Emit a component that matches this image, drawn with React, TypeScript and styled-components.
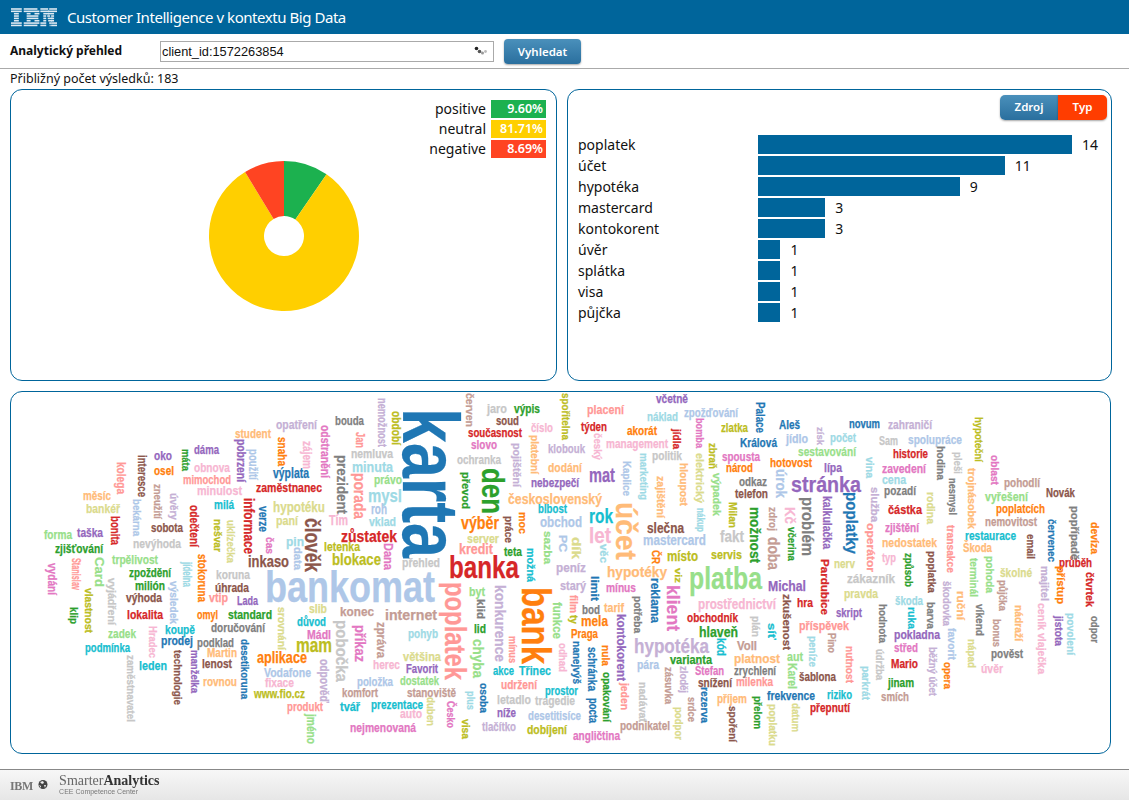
import React from 'react';
import styled, { createGlobalStyle } from 'styled-components';

const GlobalStyle = createGlobalStyle`
  html, body { margin: 0; padding: 0; background: #fff; }
  body { font-family: "Noto Sans", "Liberation Sans", sans-serif; color: #111; }
`;

const BLUE = '#00659b';

// d3 category20, the palette of the cloud
const PALETTE: Record<string, string> = {
  a: '#1f77b4', b: '#aec7e8', c: '#ff7f0e', d: '#ffbb78', e: '#2ca02c',
  f: '#98df8a', g: '#d62728', h: '#ff9896', i: '#9467bd', j: '#c5b0d5',
  k: '#8c564b', l: '#c49c94', m: '#e377c2', n: '#f7b6d2', o: '#7f7f7f',
  p: '#c7c7c7', q: '#bcbd22', r: '#dbdb8d', s: '#17becf', t: '#9edae5',
};

type Word = [string, number, number, number, number, string];

// text, left, baseline, length, font size, colour (page coordinates)
const FLAT_WORDS: Word[] = [
  ['opatření', 276, 429, 41, 12, 'j'], ['bouda', 335, 425, 29, 12, 'o'], ['student', 235, 438, 36, 12, 'd'],
  ['dáma', 194, 454, 25, 12, 'i'], ['oko', 154, 460, 18, 12, 'i'], ['osel', 154, 475, 20, 12, 'c'],
  ['obnova', 194, 472, 36, 12, 'n'], ['výplata', 273, 478, 36, 13, 'a'], ['mimochod', 183, 484, 48, 12, 'h'],
  ['minulost', 197, 495, 45, 12, 'n'], ['zaměstnanec', 256, 492, 66, 12, 'g'], ['měsíc', 83, 500, 28, 11, 'd'],
  ['milá', 214, 509, 20, 11, 's'], ['bankéř', 86, 513, 34, 12, 'r'], ['hypotéku', 273, 512, 52, 13, 'r'],
  ['paní', 276, 525, 22, 12, 'r'], ['Tím', 329, 525, 19, 13, 'n'], ['sobota', 151, 532, 32, 11, 'k'],
  ['forma', 44, 539, 28, 11, 'f'], ['taška', 77, 537, 26, 11, 'i'], ['nevýhoda', 133, 548, 48, 11, 'p'],
  ['zjišťování', 55, 553, 48, 11, 'e'], ['pin', 286, 546, 18, 12, 't'], ['letenka', 324, 551, 36, 11, 'q'],
  ['zůstatek', 341, 542, 56, 15, 'g'], ['blokace', 332, 565, 49, 15, 'q'], ['inkaso', 248, 567, 41, 15, 'k'],
  ['trpělivost', 112, 564, 46, 11, 'f'], ['minuta', 352, 472, 41, 14, 't'], ['nemluva', 351, 458, 42, 11, 'p'],
  ['mysl', 368, 502, 34, 17, 't'], ['roh', 371, 514, 16, 13, 'b'], ['vklad', 369, 526, 27, 11, 't'],
  ['právo', 374, 484, 28, 11, 'f'], ['zpoždění', 129, 577, 42, 11, 'e'], ['koruna', 216, 579, 34, 11, 'p'],
  ['milión', 135, 590, 30, 11, 'e'], ['úhrada', 215, 592, 34, 11, 'k'], ['výhoda', 126, 602, 36, 11, 'k'],
  ['vtip', 209, 602, 19, 11, 'h'], ['Lada', 237, 605, 21, 11, 'i'], ['lokalita', 127, 619, 36, 11, 'g'],
  ['omyl', 197, 619, 21, 11, 'c'], ['standard', 228, 619, 44, 11, 'e'], ['slib', 309, 613, 18, 11, 'r'],
  ['konec', 340, 616, 34, 11, 'l'], ['důvod', 297, 626, 29, 11, 's'], ['doručování', 211, 632, 54, 11, 'o'],
  ['koupě', 165, 634, 30, 11, 's'], ['zadek', 108, 638, 28, 11, 'f'], ['Mádl', 307, 639, 24, 11, 'm'],
  ['prodej', 161, 645, 32, 11, 'a'], ['podklad', 197, 647, 37, 11, 'o'], ['podmínka', 85, 652, 45, 11, 's'],
  ['Martin', 207, 657, 30, 11, 'd'], ['mam', 296, 652, 36, 18, 'q'], ['aplikace', 257, 663, 50, 15, 'c'],
  ['leden', 139, 670, 28, 12, 's'], ['lenost', 202, 668, 30, 11, 'k'], ['Vodafone', 264, 677, 47, 12, 'b'],
  ['fixace', 265, 687, 29, 11, 'n'], ['rovnou', 203, 686, 34, 11, 'd'], ['www.fio.cz', 254, 698, 51, 11, 'q'],
  ['herec', 373, 669, 27, 11, 'n'], ['položka', 357, 686, 36, 11, 'b'], ['komfort', 342, 697, 36, 11, 'l'],
  ['produkt', 287, 711, 36, 11, 'h'], ['tvář', 340, 711, 20, 11, 's'], ['prezentace', 371, 709, 52, 11, 's'],
  ['nejmenovaná', 350, 732, 66, 11, 'm'], ['bankomat', 265, 602, 170, 44, 'b'], ['jaro', 487, 413, 20, 11, 'p'],
  ['výpis', 514, 413, 26, 11, 'e'], ['placení', 587, 414, 37, 12, 'h'], ['včetně', 656, 403, 32, 11, 'i'],
  ['náklad', 647, 421, 31, 11, 't'], ['zpožďování', 684, 417, 54, 11, 'b'], ['soud', 496, 425, 23, 11, 'k'],
  ['současnost', 468, 437, 54, 11, 'g'], ['číslo', 531, 432, 22, 11, 'n'], ['týden', 581, 431, 26, 12, 'g'],
  ['akorát', 627, 435, 30, 11, 'c'], ['zlatka', 721, 432, 27, 11, 'q'], ['slovo', 471, 449, 26, 11, 'm'],
  ['klobouk', 548, 453, 37, 11, 'j'], ['management', 606, 448, 62, 11, 'n'], ['politik', 652, 460, 30, 11, 'p'],
  ['ochranka', 457, 464, 44, 11, 'p'], ['dodání', 548, 472, 34, 12, 'd'], ['mat', 589, 482, 26, 18, 'i'],
  ['nebezpečí', 531, 487, 48, 11, 'i'], ['československý', 508, 504, 94, 14, 'd'], ['blbost', 538, 513, 29, 12, 's'],
  ['výběr', 461, 529, 38, 17, 'c'], ['rok', 589, 523, 24, 18, 's'], ['obchod', 540, 527, 42, 14, 'b'],
  ['slečna', 647, 533, 37, 13, 'k'], ['fakt', 720, 542, 24, 15, 'p'], ['let', 589, 543, 22, 21, 'n'],
  ['server', 467, 543, 32, 11, 'r'], ['mastercard', 643, 545, 63, 13, 'b'], ['kredit', 459, 554, 34, 13, 'h'],
  ['teta', 504, 556, 18, 11, 'e'], ['místo', 667, 561, 31, 13, 'q'], ['servis', 711, 559, 31, 12, 'q'],
  ['přehled', 402, 567, 38, 11, 'p'], ['banka', 449, 578, 70, 32, 'g'], ['peníz', 556, 572, 30, 11, 'j'],
  ['hypotéky', 607, 577, 60, 14, 'd'], ['starý', 560, 590, 26, 11, 'j'], ['mínus', 606, 592, 30, 11, 'm'],
  ['internet', 385, 620, 52, 13, 'l'], ['pohyb', 408, 638, 30, 11, 't'], ['byt', 469, 596, 16, 11, 'f'],
  ['tarif', 604, 612, 20, 11, 'd'], ['bod', 582, 614, 18, 11, 'o'], ['mela', 581, 626, 27, 13, 'c'],
  ['lid', 474, 633, 12, 11, 'e'], ['Praga', 571, 638, 27, 11, 'c'], ['Favorit', 406, 673, 32, 11, 'i'],
  ['většina', 403, 661, 38, 12, 'r'], ['dostatek', 400, 685, 39, 11, 'f'], ['stanoviště', 407, 697, 49, 11, 'l'],
  ['akce', 493, 675, 21, 11, 's'], ['Třinec', 519, 675, 32, 12, 's'], ['udržení', 501, 689, 36, 11, 'h'],
  ['prostor', 545, 695, 33, 11, 's'], ['letadlo', 497, 704, 34, 11, 'p'], ['tragedie', 535, 705, 40, 11, 'p'],
  ['níže', 497, 717, 19, 11, 'i'], ['auto', 400, 718, 22, 11, 'n'], ['desetitisíce', 528, 720, 53, 11, 'b'],
  ['tlačítko', 482, 731, 34, 11, 'j'], ['dobíjení', 527, 734, 40, 11, 'q'], ['angličtina', 573, 740, 47, 11, 'm'],
  ['podnikatel', 620, 730, 50, 11, 'l'], ['hypotéka', 634, 653, 75, 18, 'j'], ['pára', 637, 669, 22, 11, 'b'],
  ['varianta', 670, 664, 42, 11, 'e'], ['Štefan', 695, 675, 29, 11, 'm'], ['snížení', 698, 687, 34, 11, 'k'],
  ['příjem', 717, 703, 30, 11, 'd'], ['obchodník', 687, 622, 51, 12, 'g'], ['hlaveň', 699, 637, 39, 13, 'e'],
  ['prostřednictví', 698, 609, 78, 13, 'n'], ['platba', 689, 589, 73, 29, 'f'], ['Voll', 737, 650, 20, 11, 'l'],
  ['platnost', 734, 663, 46, 12, 'd'], ['zrychlení', 734, 675, 42, 11, 'o'], ['milenka', 736, 686, 37, 11, 'h'],
  ['Aleš', 779, 429, 21, 11, 'a'], ['novum', 849, 428, 31, 11, 'a'], ['zahraničí', 888, 429, 44, 11, 'j'],
  ['jídlo', 786, 443, 22, 11, 'b'], ['počet', 830, 442, 26, 11, 't'], ['Sam', 879, 445, 19, 11, 'p'],
  ['spolupráce', 908, 444, 54, 11, 'b'], ['Králová', 740, 447, 37, 11, 'a'], ['sestavování', 798, 456, 58, 11, 'f'],
  ['historie', 893, 458, 35, 11, 'g'], ['hotovost', 770, 467, 42, 11, 'c'], ['lípa', 824, 472, 18, 11, 'i'],
  ['zavedení', 882, 473, 44, 11, 'm'], ['národ', 726, 472, 27, 11, 'c'], ['spousta', 722, 461, 38, 11, 'm'],
  ['odkaz', 739, 486, 28, 11, 'o'], ['telefon', 735, 498, 33, 11, 'k'], ['cena', 882, 484, 24, 11, 't'],
  ['pozadí', 884, 495, 32, 11, 'o'], ['stránka', 791, 492, 70, 20, 'i'], ['vyřešení', 985, 501, 43, 12, 'f'],
  ['pohodlí', 1004, 487, 36, 11, 'l'], ['Novák', 1046, 497, 29, 11, 'k'], ['poplatcích', 996, 513, 49, 12, 'c'],
  ['částka', 888, 514, 34, 12, 'g'], ['nemovitost', 985, 526, 52, 11, 'l'], ['zjištění', 885, 532, 34, 11, 'm'],
  ['restaurace', 965, 540, 51, 11, 's'], ['nedostatek', 882, 547, 55, 12, 'd'], ['Škoda', 963, 552, 29, 11, 'd'],
  ['typ', 882, 562, 14, 11, 'n'], ['průběh', 1059, 567, 33, 11, 'g'], ['nerv', 834, 568, 21, 11, 'r'],
  ['zákazník', 847, 583, 48, 11, 'p'], ['školné', 1000, 577, 32, 11, 'r'], ['Michal', 768, 591, 38, 13, 'i'],
  ['pravda', 844, 598, 34, 11, 'r'], ['hra', 797, 607, 16, 11, 'g'], ['škoda', 895, 605, 28, 11, 't'],
  ['skript', 836, 617, 26, 11, 'i'], ['příspěvek', 799, 630, 50, 12, 'h'], ['pokladna', 894, 639, 46, 12, 'i'],
  ['střed', 894, 652, 24, 12, 'm'], ['aut', 787, 661, 16, 12, 'f'], ['pověst', 991, 658, 32, 11, 'o'],
  ['úvěr', 981, 673, 22, 11, 'n'], ['Mario', 891, 668, 27, 11, 'g'], ['šablona', 799, 681, 37, 11, 'k'],
  ['jinam', 888, 687, 26, 11, 'e'], ['frekvence', 767, 700, 48, 11, 'a'], ['riziko', 827, 699, 25, 11, 's'],
  ['smích', 881, 701, 28, 11, 'l'], ['přepnutí', 810, 712, 40, 11, 'g'],
];

// text, baseline x, top, length, font size, colour: read from top to bottom
const TURNED_WORDS: Word[] = [
  ['nemožnost', 378, 398, 49, 11, 'j'], ['odstranění', 321, 425, 53, 11, 'm'], ['Jan', 356, 432, 16, 11, 'h'],
  ['snaha', 278, 437, 29, 11, 'c'], ['zájem', 303, 441, 28, 11, 'n'], ['pobrzení', 237, 439, 43, 11, 'i'],
  ['použití', 249, 449, 31, 11, 'b'], ['prezident', 337, 455, 59, 14, 'o'], ['kolega', 117, 462, 32, 11, 'h'],
  ['interesce', 138, 455, 42, 11, 'k'], ['máta', 182, 449, 22, 10, 'e'], ['porada', 354, 473, 46, 15, 'h'],
  ['zneužití', 154, 484, 35, 10, 'l'], ['úvěry', 170, 493, 27, 10, 'j'], ['bekárna', 133, 499, 37, 10, 'b'],
  ['bonita', 111, 516, 29, 11, 'g'], ['odečtení', 190, 505, 42, 11, 'g'], ['informace', 244, 498, 56, 13, 'g'],
  ['verze', 259, 506, 26, 12, 'a'], ['nešvar', 214, 519, 33, 10, 'q'], ['uklízečka', 227, 520, 43, 10, 'r'],
  ['člověk', 305, 518, 54, 21, 'k'], ['čas', 266, 537, 17, 10, 'm'], ['data', 294, 547, 23, 10, 'b'],
  ['jídelna', 183, 562, 25, 11, 't'], ['stokoruna', 198, 554, 48, 11, 'c'], ['vydání', 48, 563, 32, 11, 'm'],
  ['Stanislav', 72, 558, 32, 11, 'h'], ['Card', 95, 557, 30, 11, 'f'], ['vlastnost', 85, 588, 45, 10, 'q'],
  ['klip', 70, 607, 17, 10, 'e'], ['vyjádření', 108, 578, 47, 10, 'p'], ['výsledek', 170, 581, 43, 10, 'b'],
  ['Hradec', 149, 626, 32, 10, 'n'], ['srovnání', 278, 607, 43, 10, 'r'], ['technologie', 174, 650, 55, 10, 'k'],
  ['manželka', 191, 650, 43, 10, 'i'], ['desetikoruna', 241, 639, 60, 10, 'a'], ['zaměstnavatel', 127, 655, 67, 10, 'p'],
  ['pobočka', 336, 620, 62, 15, 'p'], ['příkaz', 355, 625, 37, 13, 'm'], ['zpráva', 377, 622, 36, 11, 'l'],
  ['odpověď', 320, 659, 44, 11, 'j'], ['jméno', 307, 714, 30, 11, 'f'], ['poplatek', 445, 582, 98, 28, 'h'],
  ['červen', 466, 393, 34, 10, 'l'], ['období', 392, 411, 34, 11, 'q'], ['karta', 403, 408, 150, 79, 'a'],
  ['spořitelna', 562, 393, 47, 10, 'q'], ['český', 594, 433, 27, 10, 'n'], ['jídla', 673, 429, 20, 10, 'g'],
  ['bomba', 696, 418, 30, 10, 'm'], ['elektrický', 696, 453, 50, 10, 'r'], ['platební', 531, 435, 39, 10, 'd'],
  ['pojištění', 513, 443, 44, 10, 'j'], ['den', 482, 468, 46, 29, 'e'], ['převod', 462, 472, 37, 10, 'e'],
  ['Kaplice', 623, 461, 35, 10, 'b'], ['marketing', 640, 453, 47, 10, 't'], ['zajištění', 657, 476, 42, 10, 'd'],
  ['hloupost', 680, 463, 43, 10, 'd'], ['zbraň', 709, 443, 26, 10, 'q'], ['výpadek', 713, 473, 43, 10, 'f'],
  ['nákup', 697, 508, 24, 10, 't'], ['Milan', 729, 502, 26, 10, 'q'], ['účet', 616, 502, 58, 28, 'd'],
  ['práce', 505, 516, 27, 10, 'k'], ['moc', 519, 512, 22, 10, 'c'], ['sazba', 544, 531, 33, 10, 'f'],
  ['možná', 527, 548, 34, 10, 's'], ['PC', 559, 535, 17, 10, 'b'], ['dík', 572, 537, 22, 12, 'r'],
  ['věc', 600, 544, 19, 10, 't'], ['ČR', 652, 550, 14, 10, 'c'], ['Dana', 384, 543, 27, 12, 'm'],
  ['limit', 591, 576, 25, 10, 'a'], ['reklama', 651, 578, 45, 11, 'a'], ['viz', 675, 568, 15, 9, 'q'],
  ['klient', 667, 585, 46, 17, 'm'], ['potřeba', 634, 596, 37, 10, 'o'], ['klid', 477, 599, 20, 10, 'o'],
  ['konkurence', 495, 585, 77, 14, 'j'], ['bank', 522, 587, 77, 41, 'c'], ['funkce', 553, 602, 37, 11, 'f'],
  ['film', 570, 595, 18, 10, 'h'], ['ty', 570, 615, 9, 10, 'q'], ['chyba', 473, 639, 39, 13, 'f'],
  ['mínus', 509, 636, 27, 10, 'h'], ['odhad', 559, 643, 29, 10, 'n'], ['nanejvýš', 573, 641, 43, 10, 'a'],
  ['schránka', 588, 647, 44, 11, 'a'], ['pocta', 589, 698, 25, 11, 'a'], ['nula', 602, 645, 21, 10, 'c'],
  ['opakování', 603, 672, 50, 10, 'e'], ['kontokorent', 617, 614, 67, 11, 'i'], ['jeden', 621, 683, 27, 10, 'h'],
  ['osoba', 480, 683, 30, 10, 'a'], ['plus', 467, 691, 19, 10, 't'], ['Česko', 447, 701, 27, 10, 'm'],
  ['duben', 427, 697, 29, 10, 'r'], ['visa', 462, 719, 20, 10, 'q'], ['podpor', 675, 707, 33, 10, 'r'],
  ['nadávat', 639, 682, 40, 10, 'p'], ['zásuvka', 665, 667, 37, 10, 'l'], ['zloděj', 680, 666, 27, 10, 'j'],
  ['srdce', 688, 697, 25, 10, 'l'], ['rezerva', 701, 687, 36, 10, 'a'], ['spoření', 729, 706, 36, 10, 'k'],
  ['kód', 717, 638, 18, 11, 's'], ['Palace', 756, 402, 31, 11, 'a'], ['získ', 817, 427, 18, 9, 'j'],
  ['hypoteční', 975, 417, 45, 10, 'q'], ['hodina', 937, 446, 34, 10, 'o'], ['pleši', 954, 452, 22, 10, 'p'],
  ['vina', 866, 457, 21, 10, 't'], ['oblast', 991, 455, 30, 10, 'm'], ['trojnásobek', 968, 468, 61, 10, 'd'],
  ['úrok', 776, 469, 29, 13, 'b'], ['nesmysl', 949, 478, 37, 10, 'o'], ['služba', 871, 487, 35, 10, 'j'],
  ['rodina', 927, 492, 32, 10, 'r'], ['poplatky', 846, 492, 62, 15, 'a'], ['problém', 802, 497, 59, 15, 'o'],
  ['kalkulačka', 823, 496, 53, 11, 'i'], ['možnost', 750, 507, 56, 13, 'e'], ['zdroj', 769, 507, 24, 10, 'l'],
  ['Kč', 785, 507, 17, 14, 'n'], ['doba', 768, 537, 33, 16, 'l'], ['včerina', 788, 527, 34, 10, 'e'],
  ['operátor', 867, 523, 49, 10, 'h'], ['transakce', 947, 525, 48, 10, 'h'], ['poplatka', 928, 551, 42, 10, 'k'],
  ['červenec', 1048, 519, 43, 10, 'a'], ['email', 1027, 534, 25, 10, 'k'], ['popřípadě', 1071, 506, 54, 10, 'o'],
  ['devíza', 1091, 522, 32, 10, 'c'], ['Pardubice', 821, 559, 56, 10, 'g'], ['způsob', 905, 553, 34, 10, 'e'],
  ['terminál', 970, 558, 39, 10, 'f'], ['pohoda', 986, 556, 37, 10, 'f'], ['zkušenost', 783, 594, 56, 10, 'k'],
  ['plán', 752, 616, 21, 10, 'p'], ['síť', 768, 623, 17, 10, 's'], ['peníze', 809, 636, 31, 10, 't'],
  ['Pino', 828, 633, 20, 10, 'l'], ['hodnota', 879, 604, 39, 10, 'o'], ['ruka', 908, 607, 22, 10, 's'],
  ['barva', 927, 602, 27, 10, 'o'], ['škodovka', 943, 581, 45, 10, 'j'], ['ruční', 957, 591, 29, 10, 'd'],
  ['víkend', 976, 604, 32, 10, 'o'], ['favorit', 948, 628, 32, 10, 'b'], ['bonus', 993, 619, 28, 10, 'l'],
  ['půjčka', 999, 580, 31, 10, 'l'], ['nádraží', 1015, 605, 36, 10, 'd'], ['majitel', 1041, 566, 35, 10, 'j'],
  ['přístup', 1057, 566, 38, 10, 'c'], ['čtvrtek', 1086, 572, 35, 10, 'g'], ['ceník', 1038, 603, 27, 10, 'n'],
  ['vlaječka', 1038, 633, 41, 10, 'n'], ['jistota', 1055, 616, 30, 10, 'i'], ['povolení', 1067, 613, 42, 10, 't'],
  ['odpor', 1091, 616, 27, 10, 'o'], ['nápad', 968, 639, 29, 10, 'r'], ['údržba', 876, 649, 31, 10, 'p'],
  ['parkrát', 862, 666, 34, 10, 't'], ['běžný účet', 929, 647, 49, 10, 'j'], ['opera', 944, 662, 27, 10, 'c'],
  ['nutnost', 846, 646, 37, 10, 'h'], ['Karel', 788, 663, 26, 11, 'f'], ['přelom', 754, 696, 33, 10, 'e'],
  ['poplatku', 769, 704, 42, 10, 'r'], ['datum', 792, 703, 29, 10, 'r'],
];

const BARS = [
  { label: 'poplatek', value: 14 }, { label: 'účet', value: 11 }, { label: 'hypotéka', value: 9 },
  { label: 'mastercard', value: 3 }, { label: 'kontokorent', value: 3 }, { label: 'úvěr', value: 1 },
  { label: 'splátka', value: 1 }, { label: 'visa', value: 1 }, { label: 'půjčka', value: 1 },
];

const SENTIMENT = [
  { label: 'positive', share: 9.6, color: '#1cb14f', text: '9.60%' },
  { label: 'neutral', share: 81.71, color: '#ffcf00', text: '81.71%' },
  { label: 'negative', share: 8.69, color: '#ff4422', text: '8.69%' },
];

// stripes of the IBM logo: [x, width] pieces for each of the 8 rows
const IBM_ROWS: number[][][] = [
  [[0, 11], [13, 14], [30, 8], [39, 8]],
  [[0, 11], [13, 16], [30, 9], [38, 9]],
  [[3, 5], [16, 4], [24, 5], [33, 6], [38, 6]],
  [[3, 5], [16, 12], [33, 3], [37, 3], [41, 3]],
  [[3, 5], [16, 12], [33, 3], [37.5, 5], [41, 3]],
  [[3, 5], [16, 4], [24, 5], [33, 3], [38, 4], [41, 3]],
  [[0, 11], [13, 16], [30, 6], [39, 2], [41, 6]],
  [[0, 11], [13, 14], [30, 6], [39.5, 1], [41, 6]],
];

const Page = styled.div`
  display: flex;
  flex-direction: column;
  width: 1129px;
  height: 800px;
  overflow: hidden;
`;

const Header = styled.header`
  display: flex;
  align-items: center;
  gap: 10px;
  height: 34px;
  padding-left: 11px;
  background: ${BLUE};
  color: #fff;
`;

const Title = styled.h1`
  margin: 0;
  font-size: 15px;
  font-weight: 400;
  letter-spacing: -0.45px;
`;

const Toolbar = styled.div`
  display: flex;
  align-items: center;
  height: 35px;
  padding-left: 10px;
  border-bottom: 1px solid #aaa;
  box-sizing: border-box;
`;

const Heading = styled.div`
  width: 150px;
  margin-bottom: 2px;
  font-size: 12px;
  font-weight: 700;
  color: #111;
`;

const SearchBox = styled.div`
  display: flex;
  align-items: center;
  justify-content: space-between;
  box-sizing: border-box;
  width: 334px;
  height: 21px;
  padding: 0 5px 0 1px;
  border: 1px solid #aaa;
  font-family: "Liberation Sans", Arial, sans-serif;
  font-size: 12.8px;
  color: #111;
`;

const SearchButton = styled.button`
  width: 77px;
  height: 25px;
  margin-left: 10px;
  border: 0;
  border-radius: 4px;
  background: linear-gradient(#4a90bb, #2a6f9e);
  box-shadow: 0 1px 2px rgba(0, 0, 0, 0.35);
  color: #fff;
  font-family: inherit;
  font-size: 11.5px;
  font-weight: 600;
`;

const Count = styled.div`
  height: 20px;
  padding-left: 10px;
  font-size: 12.5px;
  line-height: 20px;
`;

const Panels = styled.div`
  display: grid;
  grid-template-columns: 547px 545px;
  gap: 10px;
  padding-left: 10px;
`;

const Panel = styled.section`
  box-sizing: border-box;
  height: 292px;
  border: 1px solid ${BLUE};
  border-radius: 12px;
`;

const PiePanel = styled(Panel)`
  display: flex;
  flex-direction: column;
  padding: 10px 10px 0 0;
`;

const Legend = styled.div`
  display: grid;
  grid-template-columns: auto 55px;
  grid-auto-rows: 18px;
  gap: 2px 5px;
  align-self: flex-end;
  font-size: 14px;
  line-height: 18px;
  text-align: right;
`;

const Swatch = styled.div<{ $color: string }>`
  padding-right: 3px;
  background: ${(p) => p.$color};
  color: #fff;
  font-size: 12.5px;
  font-weight: 600;
`;

const PieBox = styled.div`
  align-self: center;
  margin: 2px 0 0 10px;
  line-height: 0;
`;

const BarPanel = styled(Panel)`
  padding: 5px 4px 0 10px;
`;

const Tabs = styled.div`
  display: flex;
  justify-content: flex-end;
  height: 25px;
  margin-bottom: 15px;
`;

const Tab = styled.div<{ $active?: boolean }>`
  width: ${(p) => (p.$active ? '49px' : '58px')};
  border-radius: ${(p) => (p.$active ? '0 5px 5px 0' : '5px 0 0 5px')};
  background: ${(p) => (p.$active ? '#ff3d00' : 'linear-gradient(#4a90bb, #2a6f9e)')};
  box-shadow: 0 1px 2px rgba(0, 0, 0, 0.35);
  color: #fff;
  font-size: 11.5px;
  font-weight: 600;
  line-height: 24px;
  text-align: center;
`;

const BarRow = styled.div`
  display: flex;
  align-items: center;
  height: 19px;
  margin-bottom: 2px;
  font-size: 14px;
`;

const BarLabel = styled.div`
  width: 180px;
`;

const Bar = styled.div`
  height: 19px;
  margin-right: 10px;
  background: ${BLUE};
`;

const CloudPanel = styled.section`
  box-sizing: border-box;
  height: 363px;
  margin: 10px 18px 0 10px;
  border: 1px solid ${BLUE};
  border-radius: 12px;
  overflow: hidden;
`;

const Cloud = styled.svg`
  display: block;
  width: 100%;
  height: 100%;

  text {
    font-family: "Liberation Sans", Arial, sans-serif;
    font-weight: 700;
    stroke-width: 0.25px;
  }
`;

const Footer = styled.footer`
  display: flex;
  align-items: flex-start;
  box-sizing: border-box;
  height: 31px;
  margin-top: 15px;
  padding: 4px 0 0 10px;
  border-top: 1px solid #888;
  background: linear-gradient(#f7f7f7, #e6e6e6);
  color: #777;
`;

const FooterIbm = styled.div`
  margin: 5px 5px 0 0;
  font-family: "Liberation Serif", serif;
  font-size: 12px;
  font-weight: 700;
  letter-spacing: -0.3px;
  line-height: 14px;
  filter: blur(0.3px);
`;

const Brand = styled.div`
  margin-left: 11px;
  font-family: "Liberation Serif", serif;
  font-size: 14px;
  line-height: 13px;
  color: #666;
  filter: blur(0.3px);

  b {
    color: #333;
  }

  small {
    display: block;
    font-family: "Liberation Sans", sans-serif;
    font-size: 7px;
    line-height: 9px;
    color: #777;
  }
`;

const GlobeBox = styled.div`
  margin-top: 5px;
  line-height: 0;
`;

const IbmLogo = () => (
  <svg width="46" height="19" viewBox="0 0 47 19" fill="#dfeaf2">
    {IBM_ROWS.map((row, r) =>
      row.map(([x, w], i) => <rect key={`${r}-${i}`} x={x} y={r * 2.4} width={w} height={1.6} />),
    )}
  </svg>
);

const polar = (r: number, turn: number) => {
  const a = turn * 2 * Math.PI;
  return `${(r * Math.sin(a)).toFixed(2)} ${(-r * Math.cos(a)).toFixed(2)}`;
};

const SentimentPie = () => {
  let start = 0;
  return (
    <svg width="152" height="152" viewBox="-76 -76 152 152">
      {SENTIMENT.map((s) => {
        const end = start + s.share / 100;
        const large = s.share > 50 ? 1 : 0;
        const d = `M${polar(20, start)} L${polar(75, start)} A75 75 0 ${large} 1 ${polar(75, end)} L${polar(20, end)} A20 20 0 ${large} 0 ${polar(20, start)}Z`;
        start = end;
        return <path key={s.label} d={d} fill={s.color} />;
      })}
    </svg>
  );
};

const Spinner = () => (
  <svg width="14" height="10" viewBox="0 0 14 10">
    <circle cx="2.5" cy="2.5" r="1.8" fill="#222" />
    <circle cx="5.5" cy="5.5" r="1.8" fill="#555" />
    <circle cx="8.5" cy="7" r="1.5" fill="#999" />
    <circle cx="11.5" cy="5.5" r="1.4" fill="#bbb" />
  </svg>
);

const Globe = () => (
  <svg width="10" height="11" viewBox="0 0 10 11">
    <circle cx="5" cy="5.5" r="4.5" fill="#444" />
    <path d="M2 3l3-1 1 2-2 1zM6 6l2 0-1 3zM1 6l2 1 0 2z" fill="#eee" />
  </svg>
);

// Impact-like height for the small words; the big ones are sized from the picture
const wordSize = (size: number) => (size < 30 ? size * 1.08 : size);

export default function App() {
  return (
    <Page>
      <GlobalStyle />
      <Header>
        <IbmLogo />
        <Title>Customer Intelligence v kontextu Big Data</Title>
      </Header>
      <Toolbar>
        <Heading>Analytický přehled</Heading>
        <SearchBox>
          client_id:1572263854
          <Spinner />
        </SearchBox>
        <SearchButton>Vyhledat</SearchButton>
      </Toolbar>
      <Count>Přibližný počet výsledků: 183</Count>
      <Panels>
        <PiePanel>
          <Legend>
            {SENTIMENT.map((s) => (
              <React.Fragment key={s.label}>
                <div>{s.label}</div>
                <Swatch $color={s.color}>{s.text}</Swatch>
              </React.Fragment>
            ))}
          </Legend>
          <PieBox>
            <SentimentPie />
          </PieBox>
        </PiePanel>
        <BarPanel>
          <Tabs>
            <Tab>Zdroj</Tab>
            <Tab $active>Typ</Tab>
          </Tabs>
          {BARS.map((b) => (
            <BarRow key={b.label}>
              <BarLabel>{b.label}</BarLabel>
              <Bar style={{ width: b.value * 22.43 }} />
              {b.value}
            </BarRow>
          ))}
        </BarPanel>
      </Panels>
      <CloudPanel>
        <Cloud viewBox="11 392 1099 361">
          {FLAT_WORDS.map(([text, x, y, len, size, color], i) => (
            <text
              key={i}
              x={x}
              y={y}
              fontSize={wordSize(size)}
              fill={PALETTE[color]}
              stroke={PALETTE[color]}
              textLength={len}
              lengthAdjust="spacingAndGlyphs"
            >
              {text}
            </text>
          ))}
          {TURNED_WORDS.map(([text, x, y, len, size, color], i) => (
            <text
              key={i}
              transform={`translate(${x} ${y}) rotate(90)`}
              fontSize={wordSize(size)}
              fill={PALETTE[color]}
              stroke={PALETTE[color]}
              textLength={len}
              lengthAdjust="spacingAndGlyphs"
            >
              {text}
            </text>
          ))}
        </Cloud>
      </CloudPanel>
      <Footer>
        <FooterIbm>IBM</FooterIbm>
        <GlobeBox>
          <Globe />
        </GlobeBox>
        <Brand>
          Smarter<b>Analytics</b>
          <small>CEE Competence Center</small>
        </Brand>
      </Footer>
    </Page>
  );
}
